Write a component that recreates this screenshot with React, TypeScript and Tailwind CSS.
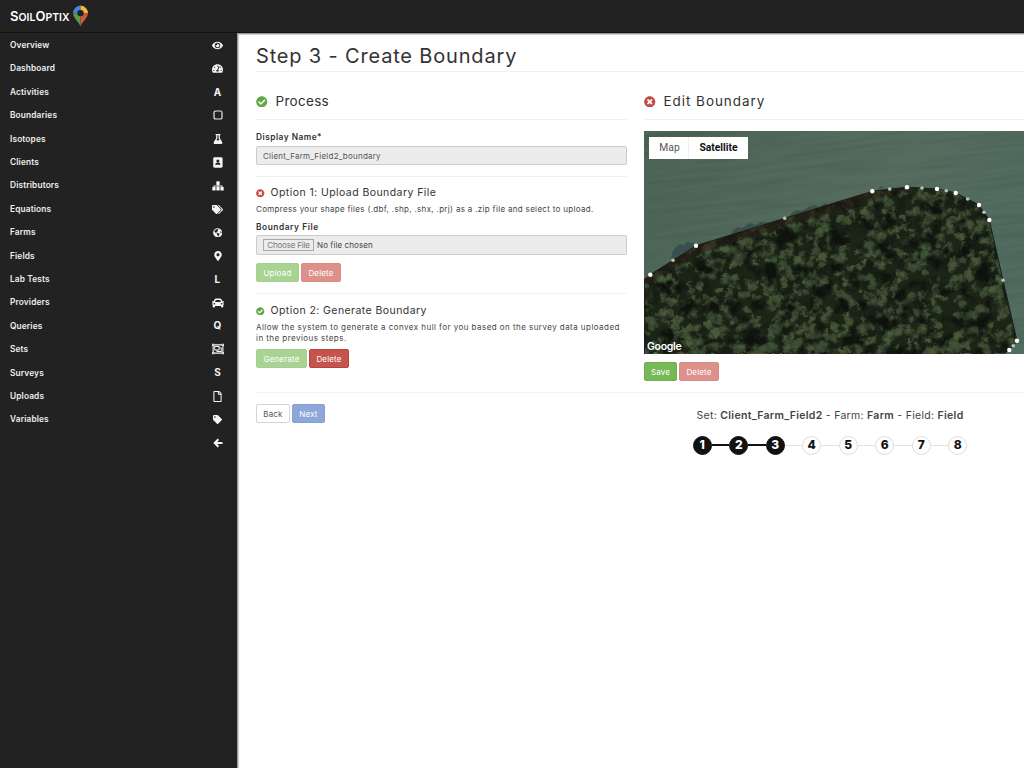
import type { ReactNode } from "react";
import type { IconType } from "react-icons";
import {
  FaCar, FaCheckCircle, FaEye, FaFlask, FaGlobeAmericas, FaMapMarkerAlt,
  FaRegFile, FaRegObjectGroup, FaTachometerAlt, FaTag, FaTags, FaTimesCircle,
} from "react-icons/fa";

function ContactIcon() {
  return (
    <svg viewBox="0 0 10 11" className="h-[11px] w-[10px]">
      <rect x="0.2" y="0.3" width="9.4" height="10.4" rx="1.4" fill="#f4f4f4" />
      <circle cx="4.9" cy="4" r="1.5" fill="#222" />
      <path d="M2.3 7.8c0-1.5 1-2.2 2.6-2.2s2.6.7 2.6 2.2z" fill="#222" />
    </svg>
  );
}

function SquareIcon() {
  return (
    <svg viewBox="0 0 10 10" className="size-[10px]">
      <rect x="1" y="1" width="8" height="8" rx="1.6" fill="none" stroke="#e8e8e8" strokeWidth="1.2" />
    </svg>
  );
}

function TreeIcon() {
  return (
    <svg viewBox="0 0 12 10" className="h-[10px] w-[12px]" fill="#f4f4f4">
      <rect x="4.3" y="0.3" width="3.4" height="3.6" rx="0.6" />
      <rect x="0.3" y="6" width="3.3" height="3.6" rx="0.6" />
      <rect x="4.35" y="6" width="3.3" height="3.6" rx="0.6" />
      <rect x="8.4" y="6" width="3.3" height="3.6" rx="0.6" />
      <path d="M1.5 6.2V4.6h9v1.6h-.9v-.7H6.5v.7h-1v-.7H2.4v.7zM5.5 3.5h1v1.5h-1z" />
    </svg>
  );
}

function ArrowIcon() {
  return (
    <svg viewBox="0 0 10 10" className="size-[10px]" fill="none" stroke="#f4f4f4" strokeWidth="2">
      <path d="M5.4 1.2L1.700 5l3.700 3.800M2 5h7.500" />
    </svg>
  );
}

const menu: { label: string; icon?: IconType; letter?: string; size?: number; drawing?: ReactNode }[] = [
  { label: "Overview", icon: FaEye, size: 11 },
  { label: "Dashboard", icon: FaTachometerAlt, size: 11 },
  { label: "Activities", letter: "A" },
  { label: "Boundaries", drawing: <SquareIcon /> },
  { label: "Isotopes", icon: FaFlask, size: 10 },
  { label: "Clients", drawing: <ContactIcon /> },
  { label: "Distributors", drawing: <TreeIcon /> },
  { label: "Equations", icon: FaTags, size: 11 },
  { label: "Farms", icon: FaGlobeAmericas, size: 9.5 },
  { label: "Fields", icon: FaMapMarkerAlt, size: 10 },
  { label: "Lab Tests", letter: "L" },
  { label: "Providers", icon: FaCar, size: 12 },
  { label: "Queries", letter: "Q" },
  { label: "Sets", icon: FaRegObjectGroup, size: 12 },
  { label: "Surveys", letter: "S" },
  { label: "Uploads", icon: FaRegFile, size: 11 },
  { label: "Variables", icon: FaTag, size: 9 },
];

function Logo() {
  return (
    <div className="flex items-center pl-[10px]">
      <span className="w-[60px] pt-[2px] text-[13px] leading-none font-semibold text-white">
        S<span className="text-[10.5px]">OIL</span>O<span className="text-[10.5px]">PTIX</span>
      </span>
      <svg viewBox="0 0 16 22" className="ml-[2px] h-[22px] w-[17px]">
        <path d="M8 .5A7.5 7.5 0 0 0 .6 8.6L5.4 8A2.8 2.8 0 0 1 8 5.4z" fill="#4285d6" />
        <path d="M8 .5a7.5 7.5 0 0 1 7.4 8.1L10.7 8A2.8 2.8 0 0 0 8 5.4z" fill="#f2bb32" />
        <path d="M15.4 8.6C15.2 13 9.8 17 8 21.5V10.8A2.8 2.8 0 0 0 10.7 8z" fill="#d4553b" />
        <path d="M.6 8.6C.8 13 6.2 17 8 21.5V10.8A2.8 2.8 0 0 1 5.4 8z" fill="#63974a" />
        <circle cx="8" cy="8.1" r="3.2" fill="#1c2030" />
      </svg>
    </div>
  );
}

const tones = {
  green: "border-[#6fae4c] bg-[#77b955] text-white",
  greenOff: "border-[#a5cf90] bg-[#a9d393] text-white",
  red: "border-[#b4443c] bg-[#c6544c] text-white",
  redOff: "border-[#d98a84] bg-[#dd918b] text-white",
  blueOff: "border-[#859fd2] bg-[#8da7d8] text-white",
  plain: "border-[#d4d4d4] bg-white text-[#555]",
};

function Button({ tone, width, children }: { tone: keyof typeof tones; width: string; children: ReactNode }) {
  return (
    <button className={`flex h-[19px] items-center justify-center rounded-[2px] border text-[8px] leading-none tracking-[0.15px] ${width} ${tones[tone]}`}>
      {children}
    </button>
  );
}

const handles: [number, number, boolean][] = [
  [6.3, 143.7, true], [29, 129.3, false], [52, 114.7, true], [140.7, 87.3, false],
  [228.3, 60.3, true], [245.7, 58, false], [263, 56.3, true], [278, 57, false],
  [293, 58, true], [302.3, 59.7, false], [311.7, 62, true], [323.7, 68, false],
  [335, 74, true], [340, 81.3, false], [345.3, 89, true], [359, 149.3, false],
  [373, 209.7, true], [369.3, 214.7, false], [365.3, 219, true],
];

function rng(seed: number) {
  let s = seed;
  return () => {
    s = (s * 16807) % 2147483647;
    return s / 2147483647;
  };
}

const random = rng(4271);
const crowns = Array.from({ length: 1700 }, () => ({
  x: random() * 380,
  y: 50 + random() * 175,
  r: 2.5 + random() * 4,
  kind: Math.floor(random() * 4),
}));
const crownColors = ["#4a5e3b", "#3e5236", "#48553a", "#161d13"];

function SatelliteMap() {
  const line = handles.map(([x, y]) => `${x},${y}`).join(" ");
  return (
    <svg viewBox="0 0 380 223" className="block h-[223px] w-[380px]">
      <defs>
        <linearGradient id="field" x1="0" y1="0" x2="1" y2="0.4">
          <stop offset="0" stopColor="#4b6556" />
          <stop offset="0.6" stopColor="#566d5e" />
          <stop offset="1" stopColor="#526c62" />
        </linearGradient>
        {crownColors.map((c, i) => (
          <radialGradient key={c} id={`crown${i}`} cx="0.42" cy="0.36" r="0.6">
            <stop offset="0" stopColor={c} stopOpacity="0.95" />
            <stop offset="0.5" stopColor={c} stopOpacity="0.65" />
            <stop offset="1" stopColor="#10170e" stopOpacity="0.1" />
          </radialGradient>
        ))}
        <filter id="furrows" x="0" y="0" width="1" height="1" colorInterpolationFilters="sRGB">
          <feTurbulence type="fractalNoise" baseFrequency="0.012 0.22" numOctaves="3" seed="4" />
          <feColorMatrix values="0 0 0 0 0.2  0 0 0 0 0.27  0 0 0 0 0.23  1.1 0 0 0 -0.4" />
        </filter>
        <filter id="canopy" x="0" y="0" width="1" height="1" colorInterpolationFilters="sRGB">
          <feTurbulence type="fractalNoise" baseFrequency="0.2" numOctaves="3" seed="11" result="n" />
          <feDisplacementMap in="SourceGraphic" in2="n" scale="7" xChannelSelector="R" yChannelSelector="G" />
        </filter>
        <filter id="shade" x="0" y="0" width="1" height="1" colorInterpolationFilters="sRGB">
          <feTurbulence type="fractalNoise" baseFrequency="0.06" numOctaves="4" seed="23" />
          <feColorMatrix values="0 0 0 0 0.05  0 0 0 0 0.07  0 0 0 0 0.05  4 0 0 0 -2" />
        </filter>
        <clipPath id="woods">
          <polygon points={`0,148 ${line} 360,223 0,223`} />
        </clipPath>
      </defs>
      <rect width="380" height="223" fill="url(#field)" />
      <g transform="rotate(-7 190 110)">
        <rect x="-40" y="-40" width="460" height="300" filter="url(#furrows)" opacity="0.4" />
      </g>
      <path d="M27 130l1-8 4-6 4-3 4 1 3-3 6 1 4 2z M86 107l3-8 5-3 4 1 8-5 5 2 6-3 10 1 6-3 7 2z M144 86l6-6 4-1 3 1 9-5 5-1 4 2 6-4 4 2 9-4 5 1-2 4z M234 58l3-3 4 2z" fill="#30464a" opacity="0.7" />
      <g clipPath="url(#woods)">
        <g filter="url(#canopy)">
          <rect width="380" height="223" fill="#1b2417" />
          {crowns.map((c, i) => (
            <circle key={i} cx={c.x} cy={c.y} r={c.r} fill={`url(#crown${c.kind})`} />
          ))}
        </g>
        <rect y="-6" width="380" height="235" fill="none" stroke="#1b2417" strokeWidth="2" />
        <rect width="380" height="223" filter="url(#shade)" />
        <path d="M0 149L52 115L228 60L263 56L232 69L150 92L60 121L0 154z" fill="#2a1d14" opacity="0.5" />
      </g>
      <polyline points={line} fill="none" stroke="#151c14" strokeWidth="0.9" />
      {handles.map(([x, y, big]) => (
        <circle key={x} cx={x} cy={y} r={big ? 2.2 : 1.8} fill={big ? "#fff" : "#b9c1b6"} />
      ))}
    </svg>
  );
}

function Heading({ ok, tracking, children }: { ok: boolean; tracking: string; children: ReactNode }) {
  return (
    <h2 className="flex h-[48px] items-center border-b border-[#f1f1f1] pt-[12px] text-[13.5px] text-[#333]">
      {ok ? <FaCheckCircle className="mr-[8px] size-[11.5px] text-[#5fa844]" /> : <FaTimesCircle className="mr-[8px] size-[11.5px] text-[#c24a43]" />}
      <span className={tracking}>{children}</span>
    </h2>
  );
}

function Option({ ok, children }: { ok: boolean; children: ReactNode }) {
  return (
    <h3 className="flex h-[14px] items-center text-[10.5px] text-[#333]">
      {ok ? <FaCheckCircle className="mr-[6px] size-[8.5px] text-[#5fa844]" /> : <FaTimesCircle className="mr-[6px] size-[8.5px] text-[#c24a43]" />}
      <span className="tracking-[0.43px]">{children}</span>
    </h3>
  );
}

export default function App() {
  return (
    <div className="flex h-[768px] w-[1024px] flex-col overflow-hidden bg-[#222] font-['Inter',sans-serif]">
      <header className="flex h-[33px] shrink-0 items-center border-b border-[#111]">
        <Logo />
      </header>
      <div className="flex min-h-0 flex-1">
        <nav className="w-[237px] shrink-0 pt-[0.6px]">
          {menu.map(({ label, icon: Icon, letter, size, drawing }) => (
            <div key={label} className="flex h-[23.4px] items-center justify-between pl-[10px] text-[8.3px] font-semibold tracking-[0.15px] text-[#eee]">
              <span>{label}</span>
              <span className="mr-[9.5px] flex w-[20px] items-center justify-center text-[10px] font-bold text-[#f4f4f4]">
                {Icon && <Icon size={size} />}
                {letter}
                {drawing}
              </span>
            </div>
          ))}
          <div className="flex h-[23.4px] items-center justify-end pr-[14.5px]">
            <ArrowIcon />
          </div>
        </nav>
        <main className="flex-1 border-t border-l border-[#999] bg-white pl-[18px] shadow-[inset_1px_1px_1px_#ccc]">
          <h1 className="flex h-[38px] items-center border-b border-[#f1f1f1] pt-[7px] text-[20px] tracking-[0.83px] text-[#333]">
            Step 3 - Create Boundary
          </h1>
          <div className="flex h-[321px] gap-[17px] border-b border-[#f3f3f3]">
            <section className="w-[371px] shrink-0">
              <Heading ok tracking="tracking-[0.3px]">Process</Heading>
              <div className="h-[57px] border-b border-[#f1f1f1] pt-[11px] text-[8px] text-[#333]">
                <div className="h-[15px] text-[8.3px] leading-[13px] font-semibold tracking-[0.5px]">Display Name*</div>
                <div className="flex h-[19px] items-center rounded-[2px] border border-[#ccc] bg-[#ececec] pl-[6px] tracking-[0.22px] text-[#555]">Client_Farm_Field2_boundary</div>
              </div>
              <div className="h-[117px] border-b border-[#f1f1f1] pt-[9px] text-[8px] text-[#444]">
                <Option ok={false}>Option 1: Upload Boundary File</Option>
                <p className="mt-[4px] leading-[11px] tracking-[0.32px]">Compress your shape files (.dbf, .shp, .shx, .prj) as a .zip file and select to upload.</p>
                <div className="mt-[6px] text-[8.3px] leading-[12px] font-semibold tracking-[0.58px] text-[#333]">Boundary File</div>
                <div className="mt-[2px] flex h-[20px] items-center rounded-[2px] border border-[#ccc] bg-[#ececec] pl-[6px]">
                  <span className="mr-[3px] flex h-[12px] w-[51px] items-center justify-center border border-[#aaa] tracking-[-0.2px] text-[#777]">Choose File</span>
                  <span className="tracking-[0.1px]">No file chosen</span>
                </div>
                <div className="mt-[8px] flex gap-[2px]">
                  <Button tone="greenOff" width="w-[43px]">Upload</Button>
                  <Button tone="redOff" width="w-[40px]">Delete</Button>
                </div>
              </div>
              <div className="pt-[10px] text-[8px] text-[#444]">
                <Option ok>Option 2: Generate Boundary</Option>
                <p className="mt-[4px] leading-[11px] tracking-[0.45px]">Allow the system to generate a convex hull for you based on the survey data uploaded<br />in the previous steps.</p>
                <div className="mt-[5px] flex gap-[2px]">
                  <Button tone="greenOff" width="w-[51px]">Generate</Button>
                  <Button tone="red" width="w-[40px]">Delete</Button>
                </div>
              </div>
            </section>
            <section className="w-[380px] shrink-0">
              <Heading ok={false} tracking="tracking-[0.95px]">Edit Boundary</Heading>
              <div className="relative mt-[11px]">
                <SatelliteMap />
                <div className="absolute top-[6px] left-[5px] flex h-[22px] w-[99px] items-center bg-white font-['Roboto',sans-serif] text-[10.3px]">
                  <span className="flex h-full w-[40px] items-center justify-center border-r border-[#eee] pl-[2px] text-[#555]">Map</span>
                  <span className="flex flex-1 justify-center font-bold text-[#111]">Satellite</span>
                </div>
                <span className="absolute bottom-[1px] left-[3px] text-[10.5px] leading-[13px] font-semibold tracking-[-0.3px] text-white">Google</span>
              </div>
              <div className="mt-[8px] flex gap-[2px]">
                <Button tone="green" width="w-[33px]">Save</Button>
                <Button tone="redOff" width="w-[40px]">Delete</Button>
              </div>
            </section>
          </div>
          <div className="flex pt-[11px]">
            <div className="flex w-[436px] gap-[2px]">
              <Button tone="plain" width="w-[34px]">Back</Button>
              <Button tone="blueOff" width="w-[33px]">Next</Button>
            </div>
            <div className="flex w-[276px] flex-col items-center pt-[5px]">
              <p className="text-[10.5px] leading-[14px] tracking-[0.3px] whitespace-nowrap text-[#444]">
                Set: <b className="font-semibold">Client_Farm_Field2</b> - Farm: <b className="font-semibold">Farm</b> - Field: <b className="font-semibold">Field</b>
              </p>
              <div className="mt-[12.5px] flex items-center">
                {[1, 2, 3, 4, 5, 6, 7, 8].map((n) => (
                  <div key={n} className="flex items-center">
                    {n > 1 && <div className={n <= 3 ? "h-[2px] w-[17.5px] bg-[#111]" : "h-px w-[17.5px] bg-[#e2e2e2]"} />}
                    <div className={`flex size-[19px] items-center justify-center rounded-full border text-[12px] leading-none font-extrabold ${n <= 3 ? "border-[#111] bg-[#111] text-white" : "border-[#ddd] bg-white text-[#111]"}`}>{n}</div>
                  </div>
                ))}
              </div>
            </div>
          </div>
        </main>
      </div>
    </div>
  );
}
